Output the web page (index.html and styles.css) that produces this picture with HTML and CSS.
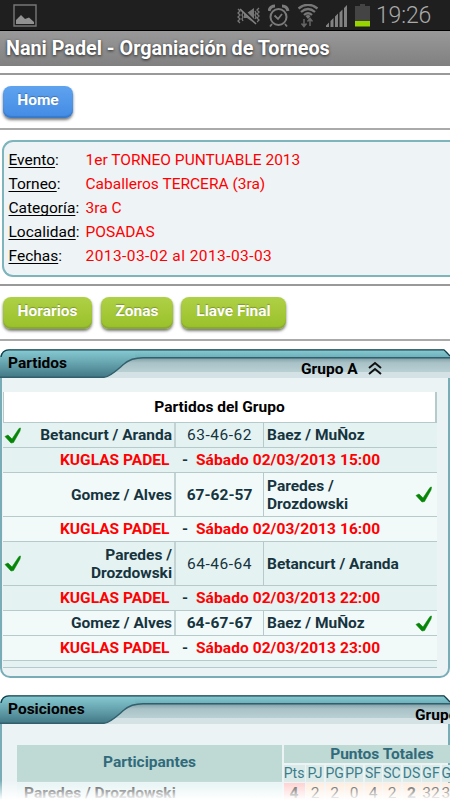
FILE: index.html
```html
<!DOCTYPE html>
<html lang="es">
<head>
<meta charset="utf-8">
<title>Nani Padel</title>
<link rel="stylesheet" href="styles.css">
</head>
<body>
<svg class="defs" width="0" height="0">
  <defs>
    <linearGradient id="tab" x1="0" y1="0" x2="0" y2="1"><stop offset="0" stop-color="#86cbd3"/><stop offset=".35" stop-color="#70afb9"/><stop offset="1" stop-color="#427986"/></linearGradient>
    <linearGradient id="strip" x1="0" y1="0" x2="0" y2="1"><stop offset="0" stop-color="#88cbd2"/><stop offset="1" stop-color="#70b1bb"/></linearGradient>
    <linearGradient id="shade" x1="0" y1="0" x2="0" y2="1"><stop offset="0" stop-color="#819fa6"/><stop offset=".35" stop-color="#a9c2c7"/><stop offset="1" stop-color="#b9d0d3"/></linearGradient>
    <symbol id="head" viewBox="0 0 450 30">
      <path d="M1 10H450V29H1Z" fill="#d4e2e6"/>
      <path d="M110 9H450V23H105Z" fill="url(#shade)"/>
      <path d="M0 28V8Q1 1 9 .8H444L450 7V9H143Q131 9 124 15C117 21 110 28 104 28Z" fill="url(#tab)"/>
      <path d="M135 1H444L449 6V8H135Z" fill="url(#strip)"/>
      <path d="M1 8Q2 1 9 .8H444L450 7" fill="none" stroke="#143f4b" stroke-width="1.3"/>
      <path d="M0 28.3H104C110 28 117 21 124 15Q131 8.7 143 8.7H450" fill="none" stroke="#315f6c" stroke-width="1.4"/>
    </symbol>
    <symbol id="check" viewBox="0 0 18 17"><path d="M1 9.5 4 8 8 12 15 1.5 16.5 1 16 4 9.5 15.5 7 16Z" fill="#058607" stroke="#058607" stroke-width=".6"/></symbol>
  </defs>
</svg>
<header class="status">
  <svg class="picture" width="24" height="24" viewBox="0 0 24 24"><path d="M1 1H23V22H1Z" fill="none" stroke="#777" stroke-width="1.4"/><path d="M3 20V16L8 11 12 15 16 13.500 21 18V20Z" fill="#929292"/></svg>
  <div class="status-icons">
    <svg width="24" height="24" viewBox="0 0 24 24"><g fill="none" stroke="#777" stroke-width="1.3"><path d="M1 5 3 7 1 9 3 11 1 13 3 15 1 17 3 19M5 7 6 9 5 11 6 13 5 15 6 17M22 4 20 6 22 8 20 10 22 12 20 14 22 16 20 18M18 7 19 9 18 11 19 13 18 15"/></g><path d="M7 9H10L17 4V19L10 14H7Z" fill="#777"/><path d="M4 4 19 19" stroke="#1f1f1f" stroke-width="3"/><path d="M3 5 19 20" stroke="#858585" stroke-width="1.6"/></svg>
    <svg width="22" height="24" viewBox="0 0 22 24"><g fill="none" stroke="#7b7b7b"><circle cx="10.500" cy="13" r="8" stroke-width="2"/><path d="M6.500 11.500 10 15 14 10M4 20 2 22.500M17 20 19 22.500" stroke-width="1.8"/><path d="M1 7Q2 2 7 2M14 2Q19 2 20 7" stroke-width="3"/></g></svg>
    <svg width="22" height="25" viewBox="0 0 22 25"><g fill="none" stroke="#777" stroke-width="2.300"><path d="M1.500 4.500Q11-3 20.500 4.500M4 8Q11 2 18 8M7 11Q11 7.500 15 11"/></g><path d="M8.500 12 11 15 13.500 12Q11 10 8.500 12Z" fill="#777"/><path d="M7 15V22M4.500 19.500 7 22.500 9.500 19.500M13 22V15M10.500 17.500 13 14.500 15.500 17.500" fill="none" stroke="#666" stroke-width="1.5"/></svg>
    <svg width="22" height="23" viewBox="0 0 22 23"><path d="M0 22V20.500L3 17.500V22ZM4.500 22V16L7.500 13V22ZM9 22V11.500L12 8.500V22ZM13.500 22V7.500L16.500 4.500V22ZM18 22V3L21 0V22Z" fill="#828282"/></svg>
    <svg width="15" height="23" viewBox="0 0 15 23"><path d="M5 0H10V2H15V22H0V2H5Z" fill="#444"/><path d="M0 17H15V22.500H0Z" fill="#98d500"/></svg>
  </div>
  <span class="clock">19:26</span>
</header>
<h1 class="title"><span>Nani Padel - Organiación de Torneos</span></h1>
<nav class="bar home-bar"><a class="btn blue">Home</a></nav>
<section class="info">
  <dl>
    <dt><u>Evento</u>:</dt><dd>1er TORNEO PUNTUABLE 2013</dd>
    <dt><u>Torneo</u>:</dt><dd>Caballeros TERCERA (3ra)</dd>
    <dt><u>Categoría</u>:</dt><dd>3ra C</dd>
    <dt><u>Localidad</u>:</dt><dd>POSADAS</dd>
    <dt><u>Fechas</u>:</dt><dd class="dates">2013-03-02 al 2013-03-03</dd>
  </dl>
</section>
<nav class="bar links"><a class="btn horarios">Horarios</a><a class="btn zonas">Zonas</a><a class="btn llave">Llave Final</a></nav>
<section class="panel matches">
  <div class="head"><svg class="head-bg" width="450" height="30"><use href="#head"/></svg><h2>Partidos</h2><span class="group">Grupo A</span><svg class="up" width="14" height="14" viewBox="0 0 14 14"><path d="M1 7 7 2 13 7M1 13 7 8 13 13" fill="none" stroke="#111" stroke-width="2"/></svg></div>
  <div class="table">
    <div class="caption">Partidos del Grupo</div>
    <div class="row r1 dark"><div class="home-team"><svg class="check" width="18" height="17"><use href="#check"/></svg><span>Betancurt / Aranda</span></div><div class="score thin">63-46-62</div><div class="away">Baez / MuÑoz</div></div>
    <div class="place dark"><span class="club">KUGLAS PADEL</span><i>-</i><span>Sábado 02/03/2013 15:00</span></div>
    <div class="row r2"><div class="home-team"><span>Gomez / Alves</span></div><div class="score">67-62-57</div><div class="away"><span>Paredes /<br>Drozdowski</span><svg class="check" width="18" height="17"><use href="#check"/></svg></div></div>
    <div class="place"><span class="club">KUGLAS PADEL</span><i>-</i><span>Sábado 02/03/2013 16:00</span></div>
    <div class="row r3 dark"><div class="home-team"><svg class="check" width="18" height="17"><use href="#check"/></svg><span>Paredes /<br>Drozdowski</span></div><div class="score thin">64-46-64</div><div class="away">Betancurt / Aranda</div></div>
    <div class="place dark"><span class="club">KUGLAS PADEL</span><i>-</i><span>Sábado 02/03/2013 22:00</span></div>
    <div class="row r4"><div class="home-team"><span>Gomez / Alves</span></div><div class="score">64-67-67</div><div class="away"><span>Baez / MuÑoz</span><svg class="check" width="18" height="17"><use href="#check"/></svg></div></div>
    <div class="place"><span class="club">KUGLAS PADEL</span><i>-</i><span>Sábado 02/03/2013 23:00</span></div>
    <div class="last dark"></div>
  </div>
</section>
<section class="panel standings">
  <div class="head"><svg class="head-bg" width="450" height="30"><use href="#head"/></svg><h2>Posiciones</h2><span class="group">Grupo</span></div>
  <div class="grid">
    <div class="th part">Participantes</div><div class="th total">Puntos Totales</div>
    <div class="sub">Pts</div><div class="sub">PJ</div><div class="sub">PG</div><div class="sub">PP</div><div class="sub">SF</div><div class="sub">SC</div><div class="sub">DS</div><div class="sub">GF</div><div class="sub left">GC</div>
    <div class="name">Paredes / Drozdowski</div><div class="pts">4</div><div>2</div><div>2</div><div>0</div><div>4</div><div>2</div><div><b>2</b></div><div>32</div><div class="left">30</div>
  </div>
</section>
<div class="fade"></div>
</body>
</html>
```
FILE: styles.css
```css
* { box-sizing: border-box; }
body { margin: 0; width: 450px; height: 800px; overflow: hidden; background: #fff; font: 15.5px/24px Roboto, sans-serif; color: #000; position: relative; }
svg { flex: none; display: block; }
.defs { position: absolute; }
.status { height: 31px; background: #1f1f1f; border-bottom: 1px solid #000; display: flex; align-items: flex-start; padding: 4px 0 0 13px; }
.status-icons { display: flex; align-items: flex-start; gap: 8px; margin-left: 200px; }
.status-icons svg:nth-child(2) { margin-left: -1px; }
.status-icons svg:nth-child(3) { margin-left: -1px; }
.status-icons svg:nth-child(4) { margin: 1px 0 0 -1px; }
.status-icons svg:nth-child(5) { margin-left: -1px; }
.clock { font-size: 23px; line-height: 24px; font-weight: 300; margin-left: 6px; letter-spacing: -.15px; color: #aaa; }
.title { margin: 0; height: 35px; padding-left: 6px; background: linear-gradient(#999, #808080); color: #fff; font-size: 19.75px; line-height: 35px; font-weight: 700; text-shadow: 0 1px 3px #222; white-space: nowrap; }
.bar { border: solid #999; border-width: 2px 0; border-bottom-color: #aaa; display: flex; }
.home-bar { height: 57px; margin-top: 7px; padding: 11px 3px; }
.btn { height: 32px; border-radius: 8px; color: #fff; font-weight: 700; line-height: 29px; text-align: center; background: linear-gradient(#afd046, #99c129); box-shadow: 0 2px 3px #777, inset 0 -2px 1px #87a835; text-shadow: 0 -1px 1px #0004; white-space: nowrap; }
.blue { width: 70px; background: linear-gradient(#5fa3ef, #438be5); box-shadow: 0 2px 3px #777, inset 0 -2px 1px #397bc8; }
.info { height: 137px; margin: 10px 0 0 2px; border: 2px solid #7eb4bb; border-right: 0; border-radius: 11px 0 0 11px; background: #eef3f5; padding: 6px 0 0 4.5px; width: 448px; }
dl { margin: 0; display: grid; grid-template-columns: 77px auto; grid-auto-rows: 24px; }
dt { white-space: nowrap; }
u { text-underline-offset: 2px; text-decoration-thickness: 1px; text-decoration-skip-ink: none; }
dd { margin: 0; color: red; white-space: nowrap; }
.dates { letter-spacing: .43px; }
.links { margin-top: 7px; height: 57px; padding: 11px 3px; gap: 9px; }
.horarios { width: 89px; } .zonas { width: 72px; } .llave { width: 105px; margin-left: -1px; }
.panel { width: 450px; border: 2px solid #78adb7; border-top: 0; border-radius: 10px; background: #ecf3f5; }
.matches { height: 329px; margin-top: 8px; }
.head { height: 43px; position: relative; margin-left: -2px; display: flex; width: 450px; }
.head-bg { position: absolute; left: 0; top: 0; }
.head > h2, .head > .group, .head > .up { position: relative; }
h2 { flex: none; margin: 0; padding-left: 8px; font-size: 15.5px; line-height: 28px; width: 301px; font-weight: 700; }
.group { line-height: 40px; font-weight: 700; white-space: nowrap; width: 67px; }
.up { margin-top: 12px; }
.table { margin-left: 1px; width: 434px; font-weight: 700; color: #16343e; }
.caption { height: 31px; background: #fff; border: 1px solid #b5cbcb; border-top: 0; border-right-width: 2px; text-align: center; line-height: 30px; color: #000; }
.row { display: grid; grid-template-columns: 173px 88px 173px; border-bottom: 1px solid #b7cacb; background: #f2f9f9; line-height: 18px; }
.row > div { display: flex; align-items: center; white-space: nowrap; }
.dark { background: #e4f2f2; }
.home-team { justify-content: space-between; text-align: right; border-right: 2px solid #c3d2d3; padding: 0 2px 0 1px; }
.home-team > span { margin-left: auto; }
.score { justify-content: center; border-right: 1px solid #b7cacb; }
.thin { font-weight: 400; letter-spacing: .5px; }
.away { padding: 0 4px 0 3px; justify-content: space-between; }
.r1 { height: 25px; } .r2 { height: 44px; } .r3 { height: 44px; } .r4 { height: 25px; }
.place { display: flex; height: 25px; line-height: 24px; border-bottom: 1px solid #b7cacb; color: red; padding-left: 57px; white-space: nowrap; background: #f2f9f9; }
.place.dark { background: #e4f2f2; }
.place > span:last-child { letter-spacing: .07px; }
.club { width: 110px; }
.place i { width: 26px; padding-left: 4px; text-align: center; color: #16343e; font-style: normal; }
.last { height: 7px; border-bottom: 1px solid #b7cacb; }
.standings { margin-top: 17px; height: 125px; }
.standings .head { height: 50px; overflow: hidden; }
.standings h2 { width: 415px; }
.grid { display: grid; margin-left: 15px; width: 449px; grid-template-columns: 265px 21px 18px 18px 18px 17px 18px 18px 18px 19px; grid-template-rows: 18px 17px 22px; gap: 1.5px; text-align: center; }
.grid > div { white-space: nowrap; background: #ffead9; line-height: 20px; color: #333; }
.grid > .th { background: #bfd9d5; color: #316b7b; font-weight: 700; }
.grid > .part { grid-row: span 2; line-height: 35px; }
.grid > .total { grid-column: span 9; line-height: 18px; padding-left: 20px; }
.grid > .sub { background: #daeae8; color: #3b7c8b; font-size: 14px; line-height: 17px; }
.grid > .left { text-align: left; }
.grid > .name { background: #e4f2f2; text-align: left; font-weight: 700; padding-left: 7px; }
.grid > .pts { background: #ffcbcb; font-weight: 700; }
.fade { position: absolute; left: 0; top: 780px; width: 450px; height: 20px; background: linear-gradient(#fff0, #fff); }
```
